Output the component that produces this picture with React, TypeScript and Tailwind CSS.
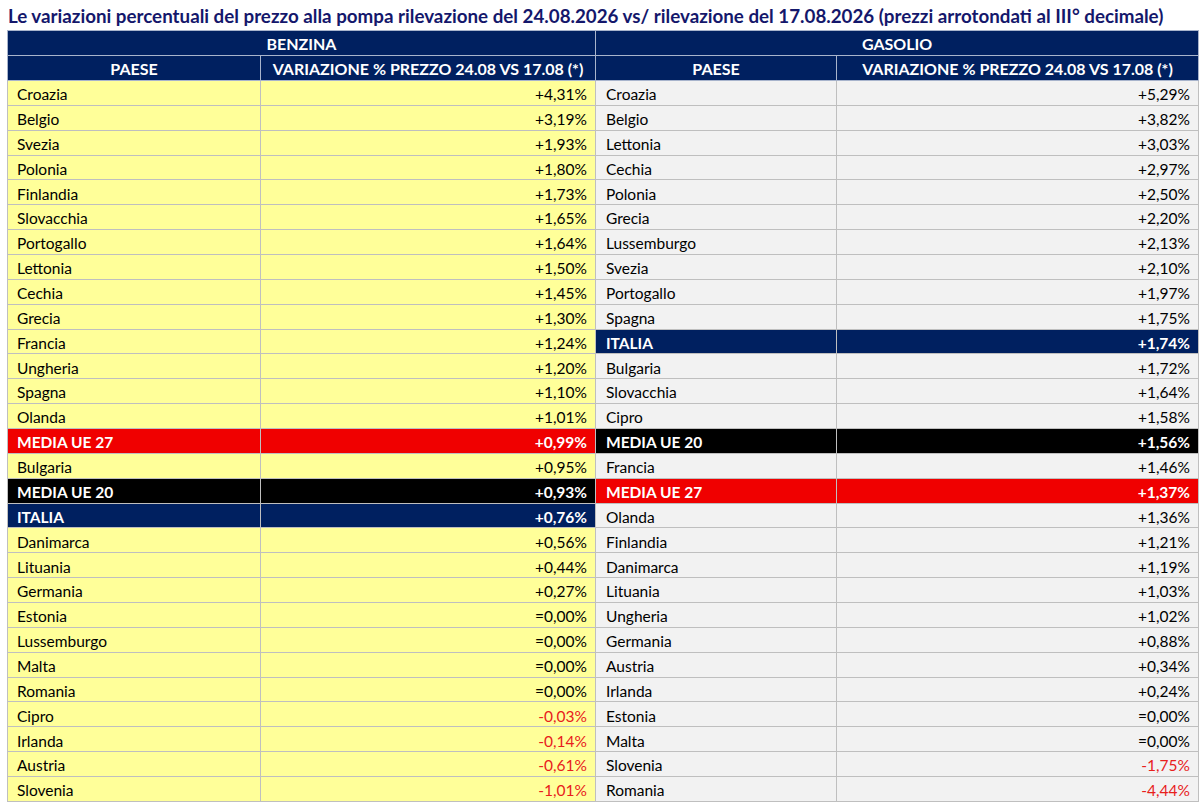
import React from "react";

type Row = { name: string; value: string; kind?: "italia" | "ue27" | "ue20" };

const benzina: Row[] = [
  { name: "Croazia", value: "+4,31%" },
  { name: "Belgio", value: "+3,19%" },
  { name: "Svezia", value: "+1,93%" },
  { name: "Polonia", value: "+1,80%" },
  { name: "Finlandia", value: "+1,73%" },
  { name: "Slovacchia", value: "+1,65%" },
  { name: "Portogallo", value: "+1,64%" },
  { name: "Lettonia", value: "+1,50%" },
  { name: "Cechia", value: "+1,45%" },
  { name: "Grecia", value: "+1,30%" },
  { name: "Francia", value: "+1,24%" },
  { name: "Ungheria", value: "+1,20%" },
  { name: "Spagna", value: "+1,10%" },
  { name: "Olanda", value: "+1,01%" },
  { name: "MEDIA UE 27", value: "+0,99%", kind: "ue27" },
  { name: "Bulgaria", value: "+0,95%" },
  { name: "MEDIA UE 20", value: "+0,93%", kind: "ue20" },
  { name: "ITALIA", value: "+0,76%", kind: "italia" },
  { name: "Danimarca", value: "+0,56%" },
  { name: "Lituania", value: "+0,44%" },
  { name: "Germania", value: "+0,27%" },
  { name: "Estonia", value: "=0,00%" },
  { name: "Lussemburgo", value: "=0,00%" },
  { name: "Malta", value: "=0,00%" },
  { name: "Romania", value: "=0,00%" },
  { name: "Cipro", value: "-0,03%" },
  { name: "Irlanda", value: "-0,14%" },
  { name: "Austria", value: "-0,61%" },
  { name: "Slovenia", value: "-1,01%" },
];

const gasolio: Row[] = [
  { name: "Croazia", value: "+5,29%" },
  { name: "Belgio", value: "+3,82%" },
  { name: "Lettonia", value: "+3,03%" },
  { name: "Cechia", value: "+2,97%" },
  { name: "Polonia", value: "+2,50%" },
  { name: "Grecia", value: "+2,20%" },
  { name: "Lussemburgo", value: "+2,13%" },
  { name: "Svezia", value: "+2,10%" },
  { name: "Portogallo", value: "+1,97%" },
  { name: "Spagna", value: "+1,75%" },
  { name: "ITALIA", value: "+1,74%", kind: "italia" },
  { name: "Bulgaria", value: "+1,72%" },
  { name: "Slovacchia", value: "+1,64%" },
  { name: "Cipro", value: "+1,58%" },
  { name: "MEDIA UE 20", value: "+1,56%", kind: "ue20" },
  { name: "Francia", value: "+1,46%" },
  { name: "MEDIA UE 27", value: "+1,37%", kind: "ue27" },
  { name: "Olanda", value: "+1,36%" },
  { name: "Finlandia", value: "+1,21%" },
  { name: "Danimarca", value: "+1,19%" },
  { name: "Lituania", value: "+1,03%" },
  { name: "Ungheria", value: "+1,02%" },
  { name: "Germania", value: "+0,88%" },
  { name: "Austria", value: "+0,34%" },
  { name: "Irlanda", value: "+0,24%" },
  { name: "Estonia", value: "=0,00%" },
  { name: "Malta", value: "=0,00%" },
  { name: "Slovenia", value: "-1,75%" },
  { name: "Romania", value: "-4,44%" },
];

function cellBg(row: Row, base: string) {
  if (row.kind === "italia") return "bg-[#002060] text-white font-bold";
  if (row.kind === "ue27") return "bg-[#f00000] text-white font-bold";
  if (row.kind === "ue20") return "bg-black text-white font-bold";
  return base;
}

function valueColor(row: Row) {
  if (row.kind) return "";
  return row.value.startsWith("-") ? "text-[#e8201c]" : "text-black";
}

export default function App() {
  return (
    <div className="w-[1202px] h-[806px] bg-white font-['Lato',sans-serif] overflow-hidden">
      <div className="h-[30px] pl-[8px] pt-[3px] flex items-center text-[18.75px] font-bold text-[#14176b] whitespace-nowrap">
        Le variazioni percentuali del prezzo alla pompa rilevazione del 24.08.2026 vs/ rilevazione del 17.08.2026 (prezzi arrotondati al III° decimale)
      </div>
      <table className="ml-[7px] w-[1191px] table-fixed border-collapse text-[15.5px] leading-none">
        <colgroup>
          <col className="w-[253px]" />
          <col className="w-[335px]" />
          <col className="w-[241px]" />
          <col className="w-[362px]" />
        </colgroup>
        <thead className="text-[16px]">
          <tr className="h-[25px] bg-[#002060] text-white font-bold">
            <th colSpan={2} className="border border-[#a8b4cc] text-center pt-[2px]">BENZINA</th>
            <th colSpan={2} className="border border-[#a8b4cc] text-left pl-[266px] pt-[2px]">GASOLIO</th>
          </tr>
          <tr className="h-[25px] bg-[#002060] text-white font-bold">
            <th className="border border-[#a8b4cc] text-center pt-[2px]">PAESE</th>
            <th className="border border-[#a8b4cc] text-center pt-[2px]">VARIAZIONE % PREZZO 24.08 VS 17.08 (*)</th>
            <th className="border border-[#a8b4cc] text-center pt-[2px]">PAESE</th>
            <th className="border border-[#a8b4cc] text-center pt-[2px]">VARIAZIONE % PREZZO 24.08 VS 17.08 (*)</th>
          </tr>
        </thead>
        <tbody>
          {benzina.map((b, i) => {
            const g = gasolio[i];
            return (
              <tr key={i} className="h-[24.86px]">
                <td className={`border border-[#bfbfbf] pl-[9px] pt-[4px] ${cellBg(b, "bg-[#ffff99] text-black")}`}>{b.name}</td>
                <td className={`border border-[#bfbfbf] pr-[8px] pt-[4px] text-right ${cellBg(b, "bg-[#ffff99]")} ${valueColor(b)}`}>{b.value}</td>
                <td className={`border border-[#bfbfbf] pl-[10px] pt-[4px] ${cellBg(g, "bg-[#f2f2f2] text-black")}`}>{g.name}</td>
                <td className={`border border-[#bfbfbf] pr-[8px] pt-[4px] text-right ${cellBg(g, "bg-[#f2f2f2]")} ${valueColor(g)}`}>{g.value}</td>
              </tr>
            );
          })}
        </tbody>
      </table>
    </div>
  );
}
